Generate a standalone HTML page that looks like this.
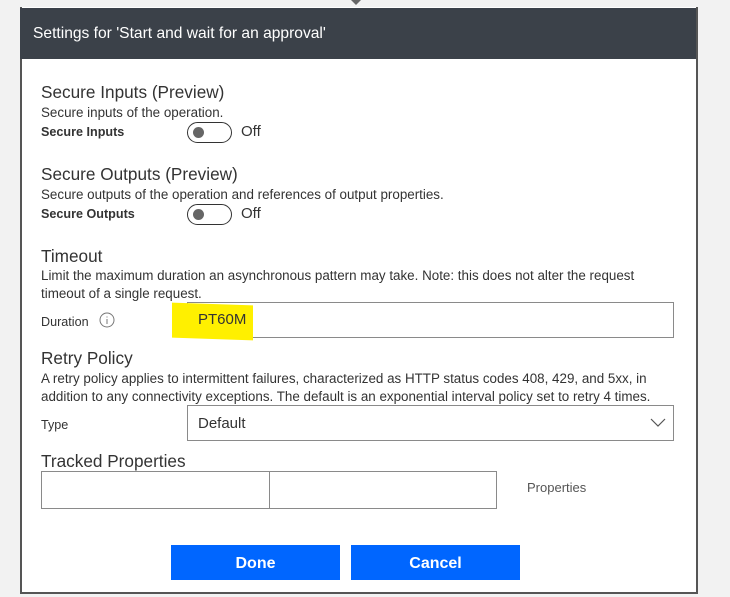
<!DOCTYPE html>
<html><head><style>
body{margin:0;width:730px;height:597px;background:#f2f2f2;position:relative;overflow:hidden;font-family:"Liberation Sans",sans-serif;color:#323130}
.dlg{position:absolute;left:20px;top:7px;width:674px;height:585px;background:#fff;border:2px solid #555;border-top:none}
.hdr{position:absolute;left:20px;top:8px;width:676px;height:51px;background:#3b4149;color:#fff;font-size:15.6px}
.a{position:absolute;white-space:nowrap}
.h{font-size:17.2px;font-weight:300;color:#333}
.d{font-size:13.4px;color:#333}
.l{font-size:12.6px;color:#333}
.tog{position:absolute;width:43px;height:19px;border:1px solid #333;border-radius:11px}
.tog:after{content:"";position:absolute;left:5px;top:4px;width:11px;height:11px;border-radius:50%;background:#666}
.box{position:absolute;border:1px solid #8a8a8a;background:#fff}
.btn{position:absolute;top:545px;width:169px;height:35px;background:#0066ff;color:#fff;font-weight:bold;font-size:16px;text-align:center;line-height:38px}
</style></head><body>
<svg class="a" style="left:349px;top:0" width="14" height="7"><path d="M2 0 L7 5 L12 0" fill="#666"/></svg>
<div class="dlg"></div>
<div class="hdr"><span class="a" style="left:13px;top:17px">Settings for 'Start and wait for an approval'</span></div>

<div class="a h" style="left:41px;top:82px">Secure Inputs (Preview)</div>
<div class="a d" style="left:41px;top:105px">Secure inputs of the operation.</div>
<div class="a l" style="left:41px;top:125px;font-weight:bold">Secure Inputs</div>
<div class="tog" style="left:187px;top:122px"></div>
<div class="a h" style="left:241px;top:123px;font-size:15px">Off</div>

<div class="a h" style="left:41px;top:164px">Secure Outputs (Preview)</div>
<div class="a d" style="left:41px;top:187px">Secure outputs of the operation and references of output properties.</div>
<div class="a l" style="left:41px;top:207px;font-weight:bold">Secure Outputs</div>
<div class="tog" style="left:187px;top:204px"></div>
<div class="a h" style="left:241px;top:205px;font-size:15px">Off</div>

<div class="a h" style="left:41px;top:246px">Timeout</div>
<div class="a d" style="left:41px;top:268px">Limit the maximum duration an asynchronous pattern may take. Note: this does not alter the request</div>
<div class="a d" style="left:41px;top:286px">timeout of a single request.</div>
<div class="a l" style="left:41px;top:315px">Duration</div>
<svg class="a" style="left:99px;top:312px" width="17" height="17"><circle cx="8" cy="8" r="7" fill="none" stroke="#777"/><path d="M8 7v5M8 4.5v1" stroke="#777"/></svg>
<div class="box" style="left:187px;top:302px;width:485px;height:34px"></div>
<div class="a" style="left:172px;top:304px;width:81px;height:35px;background:#fff000;transform:skewY(2deg)"></div>
<div class="a" style="left:198px;top:311px;font-size:15px;color:#333">PT60M</div>

<div class="a h" style="left:41px;top:348px">Retry Policy</div>
<div class="a d" style="left:41px;top:371px">A retry policy applies to intermittent failures, characterized as HTTP status codes 408, 429, and 5xx, in</div>
<div class="a d" style="left:41px;top:389px">addition to any connectivity exceptions. The default is an exponential interval policy set to retry 4 times.</div>
<div class="a l" style="left:41px;top:418px">Type</div>
<div class="box" style="left:187px;top:405px;width:485px;height:34px"></div>
<div class="a" style="left:198px;top:415px;font-size:15px;color:#333">Default</div>
<svg class="a" style="left:650px;top:418px" width="16" height="10"><path d="M1 1 L8 8 L15 1" fill="none" stroke="#555" stroke-width="1.2"/></svg>

<div class="a h" style="left:41px;top:451px">Tracked Properties</div>
<div class="box" style="left:41px;top:471px;width:454px;height:36px"></div>
<div class="a" style="left:269px;top:472px;width:1px;height:36px;background:#8a8a8a"></div>
<div class="a l" style="left:527px;top:480px;color:#555;font-size:13px">Properties</div>

<div class="btn" style="left:171px">Done</div>
<div class="btn" style="left:351px">Cancel</div>
</body></html>
